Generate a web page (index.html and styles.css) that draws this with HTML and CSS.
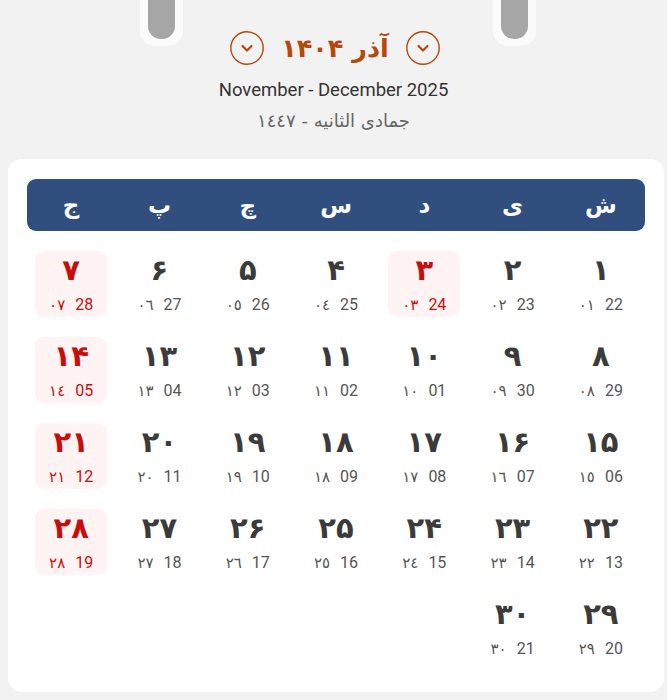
FILE: index.html
```html
<!DOCTYPE html>
<html lang="fa">
<head>
<meta charset="utf-8">
<title>تقویم آذر ۱۴۰۴</title>
<link rel="stylesheet" href="styles.css">
</head>
<body>
<header class="head">
  <div class="ring ring-left"><span class="pin"></span></div>
  <div class="ring ring-right"><span class="pin"></span></div>
  <div class="title-row">
    <button class="nav" aria-label="ماه بعد"><svg viewBox="0 0 34 34" width="34" height="34"><circle cx="17" cy="17" r="16.2" fill="none" stroke="#b5480c" stroke-width="1.4"/><path d="M12.5 15 L17 19.5 L21.5 15" fill="none" stroke="#b5480c" stroke-width="2.2" stroke-linecap="round" stroke-linejoin="round"/></svg></button>
    <h1 class="title">آذر ۱۴۰۴</h1>
    <button class="nav" aria-label="ماه قبل"><svg viewBox="0 0 34 34" width="34" height="34"><circle cx="17" cy="17" r="16.2" fill="none" stroke="#b5480c" stroke-width="1.4"/><path d="M12.5 15 L17 19.5 L21.5 15" fill="none" stroke="#b5480c" stroke-width="2.2" stroke-linecap="round" stroke-linejoin="round"/></svg></button>
  </div>
  <div class="greg">November - December 2025</div>
  <div class="hijri">جمادی الثانیه - ١٤٤٧</div>
</header>
<main class="card">
  <div class="weekdays">
    <span>ش</span><span>ی</span><span>د</span><span>س</span><span>چ</span><span>پ</span><span>ج</span>
  </div>
  <div class="grid">
    <div class="cell"><div class="num">۱</div><div class="sub"><span class="g">22</span><span class="h">٠١</span></div></div>
    <div class="cell"><div class="num">۲</div><div class="sub"><span class="g">23</span><span class="h">٠٢</span></div></div>
    <div class="cell off"><div class="num">۳</div><div class="sub"><span class="g">24</span><span class="h">٠٣</span></div></div>
    <div class="cell"><div class="num">۴</div><div class="sub"><span class="g">25</span><span class="h">٠٤</span></div></div>
    <div class="cell"><div class="num">۵</div><div class="sub"><span class="g">26</span><span class="h">٠٥</span></div></div>
    <div class="cell"><div class="num">۶</div><div class="sub"><span class="g">27</span><span class="h">٠٦</span></div></div>
    <div class="cell off"><div class="num">۷</div><div class="sub"><span class="g">28</span><span class="h">٠٧</span></div></div>

    <div class="cell"><div class="num">۸</div><div class="sub"><span class="g">29</span><span class="h">٠٨</span></div></div>
    <div class="cell"><div class="num">۹</div><div class="sub"><span class="g">30</span><span class="h">٠٩</span></div></div>
    <div class="cell"><div class="num">۱۰</div><div class="sub"><span class="g">01</span><span class="h">١٠</span></div></div>
    <div class="cell"><div class="num">۱۱</div><div class="sub"><span class="g">02</span><span class="h">١١</span></div></div>
    <div class="cell"><div class="num">۱۲</div><div class="sub"><span class="g">03</span><span class="h">١٢</span></div></div>
    <div class="cell"><div class="num">۱۳</div><div class="sub"><span class="g">04</span><span class="h">١٣</span></div></div>
    <div class="cell off"><div class="num">۱۴</div><div class="sub"><span class="g">05</span><span class="h">١٤</span></div></div>

    <div class="cell"><div class="num">۱۵</div><div class="sub"><span class="g">06</span><span class="h">١٥</span></div></div>
    <div class="cell"><div class="num">۱۶</div><div class="sub"><span class="g">07</span><span class="h">١٦</span></div></div>
    <div class="cell"><div class="num">۱۷</div><div class="sub"><span class="g">08</span><span class="h">١٧</span></div></div>
    <div class="cell"><div class="num">۱۸</div><div class="sub"><span class="g">09</span><span class="h">١٨</span></div></div>
    <div class="cell"><div class="num">۱۹</div><div class="sub"><span class="g">10</span><span class="h">١٩</span></div></div>
    <div class="cell"><div class="num">۲۰</div><div class="sub"><span class="g">11</span><span class="h">٢٠</span></div></div>
    <div class="cell off"><div class="num">۲۱</div><div class="sub"><span class="g">12</span><span class="h">٢١</span></div></div>

    <div class="cell"><div class="num">۲۲</div><div class="sub"><span class="g">13</span><span class="h">٢٢</span></div></div>
    <div class="cell"><div class="num">۲۳</div><div class="sub"><span class="g">14</span><span class="h">٢٣</span></div></div>
    <div class="cell"><div class="num">۲۴</div><div class="sub"><span class="g">15</span><span class="h">٢٤</span></div></div>
    <div class="cell"><div class="num">۲۵</div><div class="sub"><span class="g">16</span><span class="h">٢٥</span></div></div>
    <div class="cell"><div class="num">۲۶</div><div class="sub"><span class="g">17</span><span class="h">٢٦</span></div></div>
    <div class="cell"><div class="num">۲۷</div><div class="sub"><span class="g">18</span><span class="h">٢٧</span></div></div>
    <div class="cell off"><div class="num">۲۸</div><div class="sub"><span class="g">19</span><span class="h">٢٨</span></div></div>

    <div class="cell"><div class="num">۲۹</div><div class="sub"><span class="g">20</span><span class="h">٢٩</span></div></div>
    <div class="cell"><div class="num">۳۰</div><div class="sub"><span class="g">21</span><span class="h">٣٠</span></div></div>
  </div>
</main>
</body>
</html>
```
FILE: styles.css
```css
* { box-sizing: border-box; }
html, body { margin: 0; padding: 0; }
body {
  background: #f2f2f2;
  font-family: Roboto, "DejaVu Sans", sans-serif;
  color: #333;
  width: 667px;
  height: 700px;
  overflow: hidden;
}
.head {
  position: relative;
  padding-top: 31px;
  height: 159px;
  text-align: center;
}
.ring {
  position: absolute;
  top: 0;
  width: 43px;
  height: 46px;
  background: #fbfbfb;
  border-radius: 0 0 15px 15px;
  padding: 0 8px;
}
.ring-left { left: 140px; }
.ring-right { left: 493px; }
.pin {
  display: block;
  width: 27px;
  height: 39px;
  background: #a6a6a6;
  border-radius: 0 0 13px 13px;
}
.title-row {
  display: flex;
  justify-content: center;
  align-items: center;
  gap: 17px;
  height: 34px;
  direction: ltr;
  margin-left: 3px;
}
.nav {
  width: 34px;
  height: 34px;
  padding: 0;
  border: 0;
  background: none;
  display: block;
}
.nav svg { display: block; }
.title {
  margin: 0;
  font-family: "DejaVu Sans", sans-serif;
  font-weight: bold;
  font-size: 25.5px;
  line-height: 34px;
  color: #b5480c;
  direction: rtl;
}
.greg {
  margin-top: 14px;
  font-size: 18.5px;
  line-height: 22px;
  color: #333;
}
.hijri {
  margin-top: 9px;
  font-family: "DejaVu Sans", sans-serif;
  font-size: 18px;
  line-height: 22px;
  color: #666;
  direction: rtl;
}
.card {
  margin: 0 3px 0 8px;
  background: #fff;
  border-radius: 14px;
  padding: 20px 19px 31px 19px;
  height: 533px;
}
.weekdays {
  direction: rtl;
  display: grid;
  grid-template-columns: repeat(7, 1fr);
  background: #314f7e;
  border-radius: 9px;
  height: 52px;
  align-items: center;
  text-align: center;
  color: #fff;
  font-family: "DejaVu Sans", sans-serif;
  font-weight: bold;
  font-size: 23px;
}
.grid {
  direction: rtl;
  display: grid;
  grid-template-columns: repeat(7, 1fr);
  row-gap: 20px;
  padding-top: 20px;
}
.cell {
  margin: 0 8px;
  height: 66px;
  border-radius: 9px;
  display: flex;
  flex-direction: column;
  align-items: center;
  padding-top: 1px;
}
.num {
  font-family: "DejaVu Sans", sans-serif;
  font-weight: bold;
  font-size: 29px;
  line-height: 36px;
  color: #3b3b3b;
}
.sub {
  display: flex;
  gap: 10px;
  margin-top: 8px;
  font-size: 16px;
  line-height: 18px;
  color: #555;
}
.sub .h { font-family: "DejaVu Sans", sans-serif; font-size: 15px; }
.cell.off { background: #fff3f3; }
.cell.off .num, .cell.off .sub { color: #c80d0d; }
```
